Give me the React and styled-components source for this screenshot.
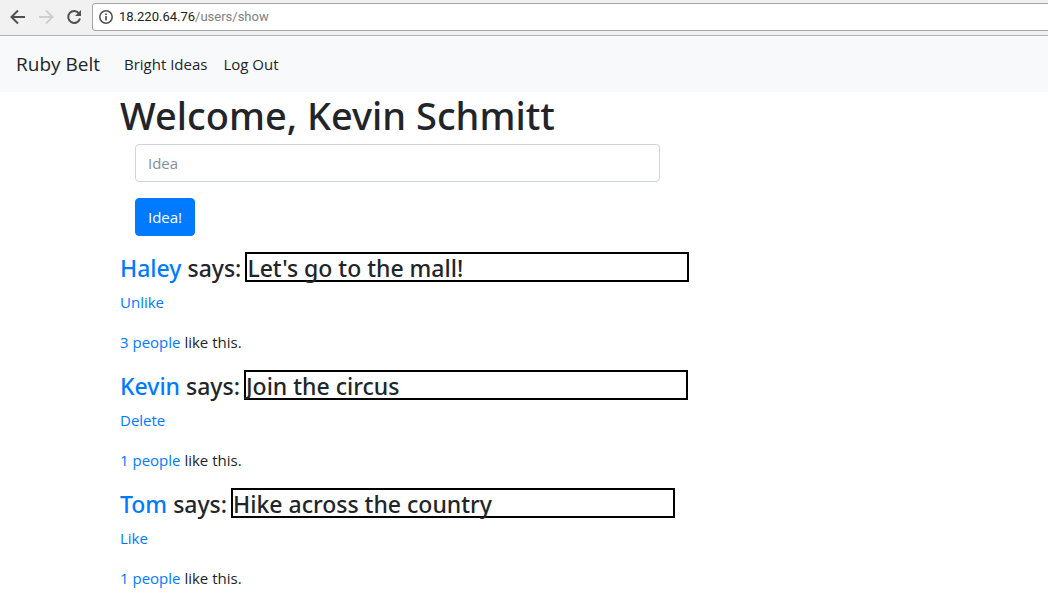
import React from "react";
import styled, { createGlobalStyle } from "styled-components";

const headingFont = `"Noto Sans", "Open Sans", sans-serif`;

const GlobalStyle = createGlobalStyle`
  *, *::before, *::after { box-sizing: border-box; }
  body {
    margin: 0;
    background: #fff;
    color: #212529;
    font-family: "Open Sans", "Noto Sans", sans-serif;
    font-size: 15px;
    line-height: 24px;
  }
`;

const BrowserBar = styled.header`
  display: flex;
  align-items: center;
  height: 36px;
  padding: 2px 0 4px 10px;
  background: #f1f1f2;
  border-bottom: 1px solid #b3b3b5;
`;

const NavButtons = styled.div`
  display: flex;
  gap: 12px;
  margin-right: 10px;
`;

const BarButton = styled.button`
  display: flex;
  width: 16px;
  height: 16px;
  padding: 0;
  border: 0;
  background: none;
  color: ${(p) => (p.disabled ? "#cfcfd0" : "#505050")};
`;

const AddressBox = styled.div`
  display: flex;
  flex: 1;
  align-items: center;
  gap: 6px;
  height: 28px;
  margin-right: -4px;
  padding-left: 6px;
  background: #fff;
  border: 1px solid #a5a5a7;
  border-radius: 3px;
`;

const Address = styled.div`
  font-family: Roboto, sans-serif;
  font-size: 13px;
  color: #808080;
`;

const Host = styled.span`
  color: #202124;
`;

const Navbar = styled.nav`
  display: flex;
  align-items: center;
  gap: 16px;
  height: 56px;
  padding: 0 16px;
  background: #f8f9fa;
`;

const NavLink = styled.a`
  color: #212529;
  text-decoration: none;
`;

const Brand = styled(NavLink)`
  margin-right: 8px;
  font-size: 19px;
`;

const Content = styled.main`
  padding-left: 120px;
`;

const Title = styled.h1`
  margin: 0 0 6px;
  font-family: ${headingFont};
  font-size: 38px;
  font-weight: 500;
  line-height: 46px;
`;

const IdeaForm = styled.form`
  display: flex;
  flex-direction: column;
  align-items: flex-start;
  gap: 16px;
  max-width: 555px;
  margin-bottom: 16px;
  padding: 0 15px;
`;

const IdeaInput = styled.input`
  width: 100%;
  height: 38px;
  padding: 6px 12px;
  border: 1px solid #ced4da;
  border-radius: 4px;
  background: #fff;
  color: #495057;
  font: inherit;
  &::placeholder { color: #868e96; opacity: 1; }
`;

const SubmitButton = styled.button`
  height: 38px;
  padding: 0 12px;
  border: 1px solid #007bff;
  border-radius: 4px;
  background: #007bff;
  color: #fff;
  font: inherit;
`;

const Idea = styled.article`
  margin-bottom: 16px;
`;

const IdeaHeading = styled.h4`
  display: flex;
  align-items: flex-start;
  gap: 4px;
  height: 30px;
  margin: 0 0 8px;
  font-family: ${headingFont};
  font-size: 23px;
  font-weight: 500;
  line-height: 32px;
  white-space: nowrap;
`;

const Message = styled.span`
  width: 444px;
  height: 30px;
  border: 2px solid #000;
  line-height: 28px;
`;

const Line = styled.p`
  margin: 0 0 16px;
`;

const Link = styled.a`
  color: #007bff;
  text-decoration: none;
`;

const ideas = [
  { author: "Haley", text: "Let's go to the mall!", action: "Unlike", likes: 3 },
  { author: "Kevin", text: "Join the circus", action: "Delete", likes: 1 },
  { author: "Tom", text: "Hike across the country", action: "Like", likes: 1 },
];

const Arrow = ({ flip }) => (
  <svg width="16" height="16" viewBox="0 0 16 16" fill="none" stroke="currentColor" strokeWidth="2">
    <path d={flip ? "M1 8H14M8 1.5L14.5 8L8 14.5" : "M15 8H2M8 1.5L1.5 8L8 14.5"} />
  </svg>
);

const Reload = () => (
  <svg width="16" height="16" viewBox="0 0 16 16">
    <path d="M13.2 4.6A6 6 0 1 0 14 9.6" fill="none" stroke="currentColor" strokeWidth="2" />
    <path d="M15 1V7H9Z" fill="currentColor" />
  </svg>
);

const Info = () => (
  <svg width="14" height="14" viewBox="0 0 14 14" fill="none" stroke="#505050">
    <circle cx="7" cy="7" r="6.2" strokeWidth="1.5" />
    <path d="M7 6V10.5M7 3.4V5" strokeWidth="1.7" />
  </svg>
);

export default function App() {
  return (
    <>
      <GlobalStyle />
      <BrowserBar>
        <NavButtons>
          <BarButton aria-label="Back"><Arrow /></BarButton>
          <BarButton aria-label="Forward" disabled><Arrow flip /></BarButton>
          <BarButton aria-label="Reload"><Reload /></BarButton>
        </NavButtons>
        <AddressBox>
          <Info />
          <Address><Host>18.220.64.76</Host>/users/show</Address>
        </AddressBox>
      </BrowserBar>
      <Navbar>
        <Brand href="#">Ruby Belt</Brand>
        <NavLink href="#">Bright Ideas</NavLink>
        <NavLink href="#">Log Out</NavLink>
      </Navbar>
      <Content>
        <Title>Welcome, Kevin Schmitt</Title>
        <IdeaForm onSubmit={(e) => e.preventDefault()}>
          <IdeaInput type="text" placeholder="Idea" aria-label="Idea" />
          <SubmitButton type="submit">Idea!</SubmitButton>
        </IdeaForm>
        {ideas.map((idea) => (
          <Idea key={idea.author}>
            <IdeaHeading>
              <span><Link href="#">{idea.author}</Link> says:</span>
              <Message>{idea.text}</Message>
            </IdeaHeading>
            <Line><Link href="#">{idea.action}</Link></Line>
            <Line><Link href="#">{idea.likes} people</Link> like this.</Line>
          </Idea>
        ))}
      </Content>
    </>
  );
}
